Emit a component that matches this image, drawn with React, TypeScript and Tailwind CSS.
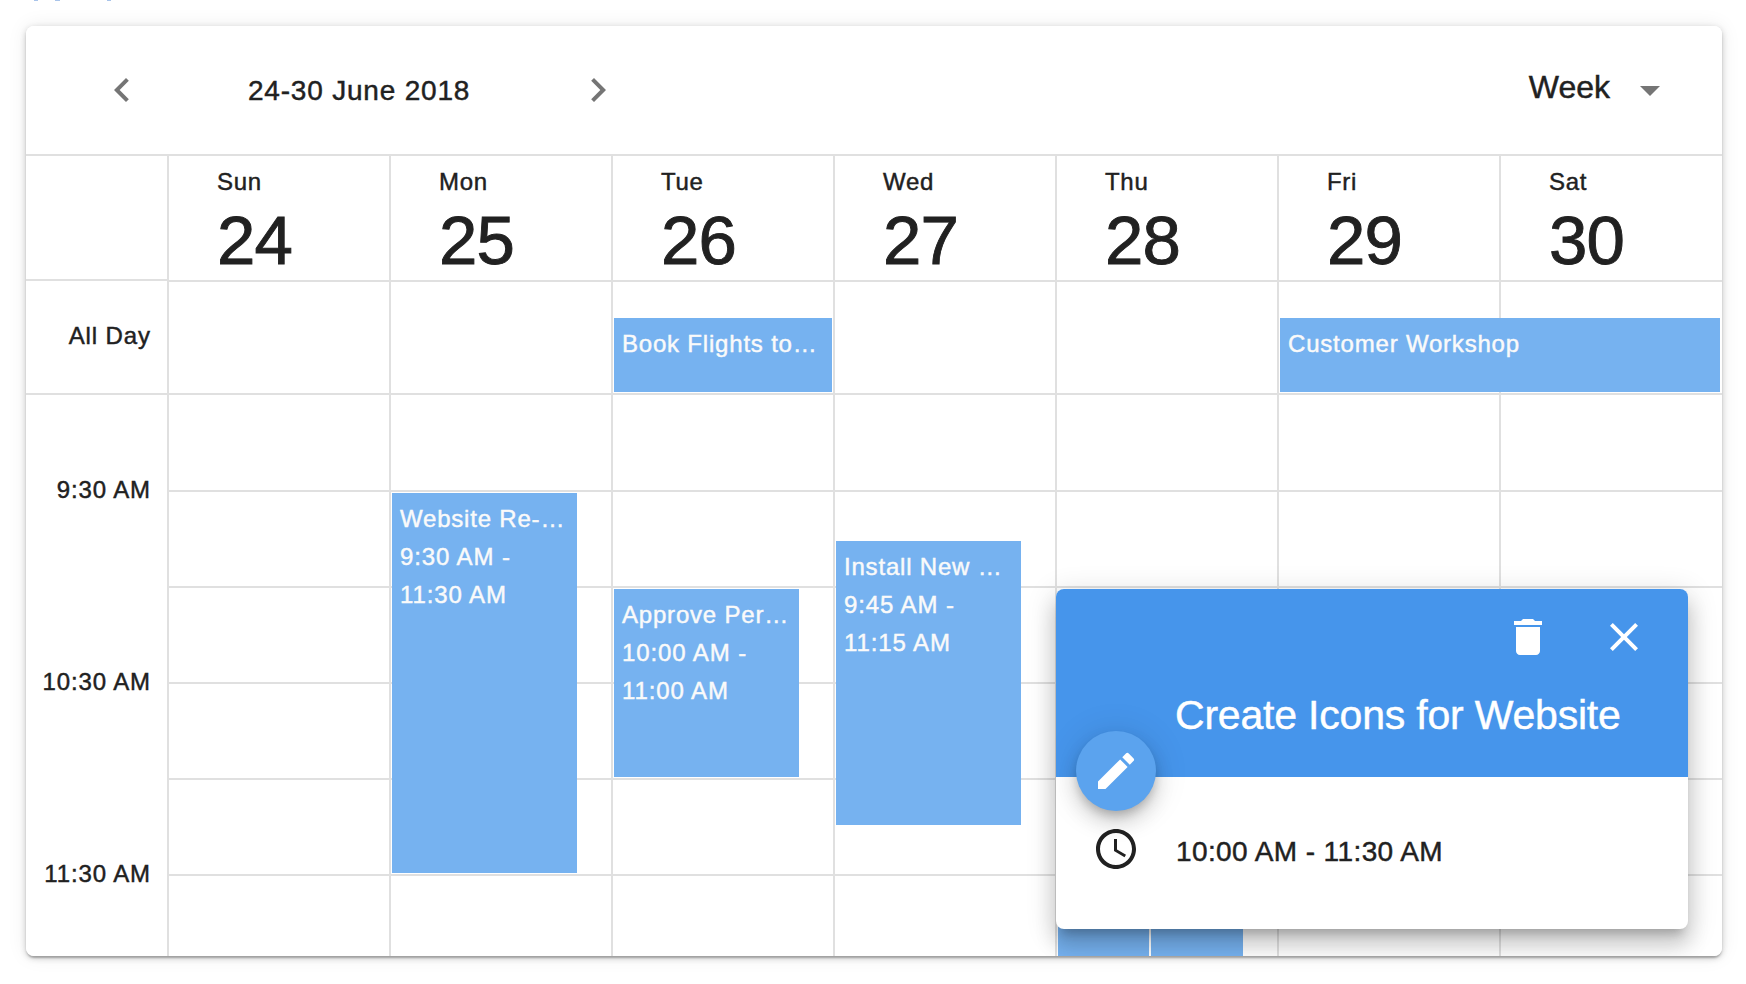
import { MdAccessTime, MdArrowDropDown, MdChevronLeft, MdChevronRight, MdClose, MdDelete, MdEdit } from "react-icons/md";

type CalEvent = { title: string; time?: string[]; box: string };
type Day = { name: string; date: number; allDay?: CalEvent; events: CalEvent[] };

const DAYS: Day[] = [
  { name: "Sun", date: 24, events: [] },
  {
    name: "Mon",
    date: 25,
    events: [{ title: "Website Re-…", time: ["9:30 AM -", "11:30 AM"], box: "top-[98px] h-[380px] left-px w-[185px]" }],
  },
  {
    name: "Tue",
    date: 26,
    allDay: { title: "Book Flights to…", box: "left-px w-[218px]" },
    events: [{ title: "Approve Per…", time: ["10:00 AM -", "11:00 AM"], box: "top-[194px] h-[188px] left-px w-[185px]" }],
  },
  {
    name: "Wed",
    date: 27,
    events: [{ title: "Install New …", time: ["9:45 AM -", "11:15 AM"], box: "top-[146px] h-[284px] left-px w-[185px]" }],
  },
  {
    name: "Thu",
    date: 28,
    events: [
      { title: "", box: "top-[482px] h-[90px] left-px w-[91px]" },
      { title: "", box: "top-[482px] h-[90px] left-[94px] w-[92px]" },
    ],
  },
  { name: "Fri", date: 29, allDay: { title: "Customer Workshop", box: "left-px w-[440px]" }, events: [] },
  { name: "Sat", date: 30, events: [] },
];

const TIMES = ["9:30 AM", "10:30 AM", "11:30 AM"];
const ROWS = ["h-[97px]", "h-24", "h-24", "h-24", "h-24", "h-24"];

function EventBlock({ event, className }: { event: CalEvent; className: string }) {
  return (
    <div className={`absolute z-10 overflow-hidden bg-[#76b2f0] pl-2 pt-[7px] text-[24px] leading-[38px] tracking-[0.8px] text-[#fafafa] ${className} ${event.box}`}>
      <div className="whitespace-nowrap">{event.title}</div>
      {event.time?.map((line) => (
        <div key={line} className="whitespace-nowrap tracking-[0.9px]">{line}</div>
      ))}
    </div>
  );
}

function DayColumn({ day }: { day: Day }) {
  return (
    <div className="w-[222px] shrink-0 border-l-2 border-[#e0e0e0] last:w-[223px]">
      <div className="h-[126px] border-b-2 border-[#e0e0e0] pl-12">
        <div className="pt-[10px] text-[24px] leading-8 tracking-[0.7px]">{day.name}</div>
        <div className="pt-[9px] text-[69px] leading-[68px] tracking-[-0.8px] [-webkit-text-stroke:0.9px_currentColor]">{day.date}</div>
      </div>
      <div className="relative h-[113px] border-b-2 border-[#e0e0e0]">
        {day.allDay && <EventBlock event={day.allDay} className="top-9 h-[74px]" />}
      </div>
      <div className="relative">
        {day.events.map((e, i) => (
          <EventBlock key={i} event={e} className="" />
        ))}
        {ROWS.map((h, i) => (
          <div key={i} className={`${h} border-b-2 border-[#e0e0e0]`} />
        ))}
      </div>
    </div>
  );
}

function Popup() {
  return (
    <div className="absolute left-[1030px] top-[563px] z-20 h-[340px] w-[632px] rounded-lg bg-white shadow-[0_10px_10px_-6px_rgba(0,0,0,0.2),0_16px_20px_2px_rgba(0,0,0,0.14),0_6px_28px_4px_rgba(0,0,0,0.12)]">
      <div className="h-[188px] rounded-t-lg bg-[#4695eb] text-white">
        <div className="flex justify-end gap-12 pr-10 pt-6">
          <MdDelete size={48} />
          <MdClose size={48} />
        </div>
        <div className="whitespace-nowrap pl-[119px] pt-7 text-[41px] leading-[52px] tracking-[-0.2px]">Create Icons for Website</div>
      </div>
      <div className="absolute left-5 top-[142px] flex size-20 items-center justify-center rounded-full bg-[#5ba3ee] text-white shadow-[0_6px_10px_-2px_rgba(0,0,0,0.2),0_12px_20px_0_rgba(0,0,0,0.14),0_2px_36px_0_rgba(0,0,0,0.12)]">
        <MdEdit size={48} />
      </div>
      <div className="flex h-[146px] items-start pl-9 pt-12">
        <MdAccessTime size={48} />
        <div className="whitespace-nowrap pl-9 pt-[7px] text-[28px] leading-10 tracking-[0.4px]">10:00 AM - 11:30 AM</div>
      </div>
    </div>
  );
}

export default function App() {
  return (
    <div className="h-[984px] w-[1746px] overflow-hidden bg-white font-['Liberation_Sans',Arial,sans-serif] text-[#212121] [-webkit-text-stroke:0.45px_currentColor]">
      <div className="flex h-[26px] items-start pl-[34px]">
        <div className="h-px w-1 bg-[#a9c4ea]" />
        <div className="ml-[17px] h-px w-[5px] bg-[#a9c4ea]" />
        <div className="ml-[47px] h-px w-1 bg-[#a9c4ea]" />
      </div>
      <div className="relative ml-[26px] h-[930px] w-[1696px] rounded-lg shadow-[0_2px_6px_0_rgba(0,0,0,0.2),0_2px_2px_0_rgba(0,0,0,0.14),0_4px_2px_-2px_rgba(0,0,0,0.12),0_0_20px_rgba(0,0,0,0.08)]">
        <div className="h-full overflow-hidden rounded-lg bg-white">
          <div className="flex h-[130px] items-center border-b-2 border-[#e0e0e0]">
            <MdChevronLeft size={48} className="ml-[72px] text-[#757575]" />
            <div className="w-[428px] whitespace-nowrap pl-[102px] pt-[2px] text-[28px] tracking-[0.8px]">24-30 June 2018</div>
            <MdChevronRight size={48} className="text-[#757575]" />
            <div className="ml-auto mr-12 flex items-center">
              <div className="pb-[6px] text-[32px]">Week</div>
              <MdArrowDropDown size={48} className="ml-4 text-[#757575]" />
            </div>
          </div>
          <div className="flex">
            <div className="w-[141px] shrink-0 pr-4 text-right text-[24px] tracking-[0.9px]">
              <div className="-mr-4 h-[125px] border-b-2 border-[#e0e0e0]" />
              <div className="-mr-4 h-[114px] border-b-2 border-[#e0e0e0] pr-4 pt-[35px] leading-10">All Day</div>
              <div className="pt-12">
                {TIMES.map((t) => (
                  <div key={t} className="h-48 pt-[27px] leading-[40px]">{t}</div>
                ))}
              </div>
            </div>
            {DAYS.map((d) => (
              <DayColumn key={d.name} day={d} />
            ))}
          </div>
        </div>
        <div className="absolute inset-0 overflow-hidden rounded-lg">
          <Popup />
        </div>
      </div>
    </div>
  );
}
